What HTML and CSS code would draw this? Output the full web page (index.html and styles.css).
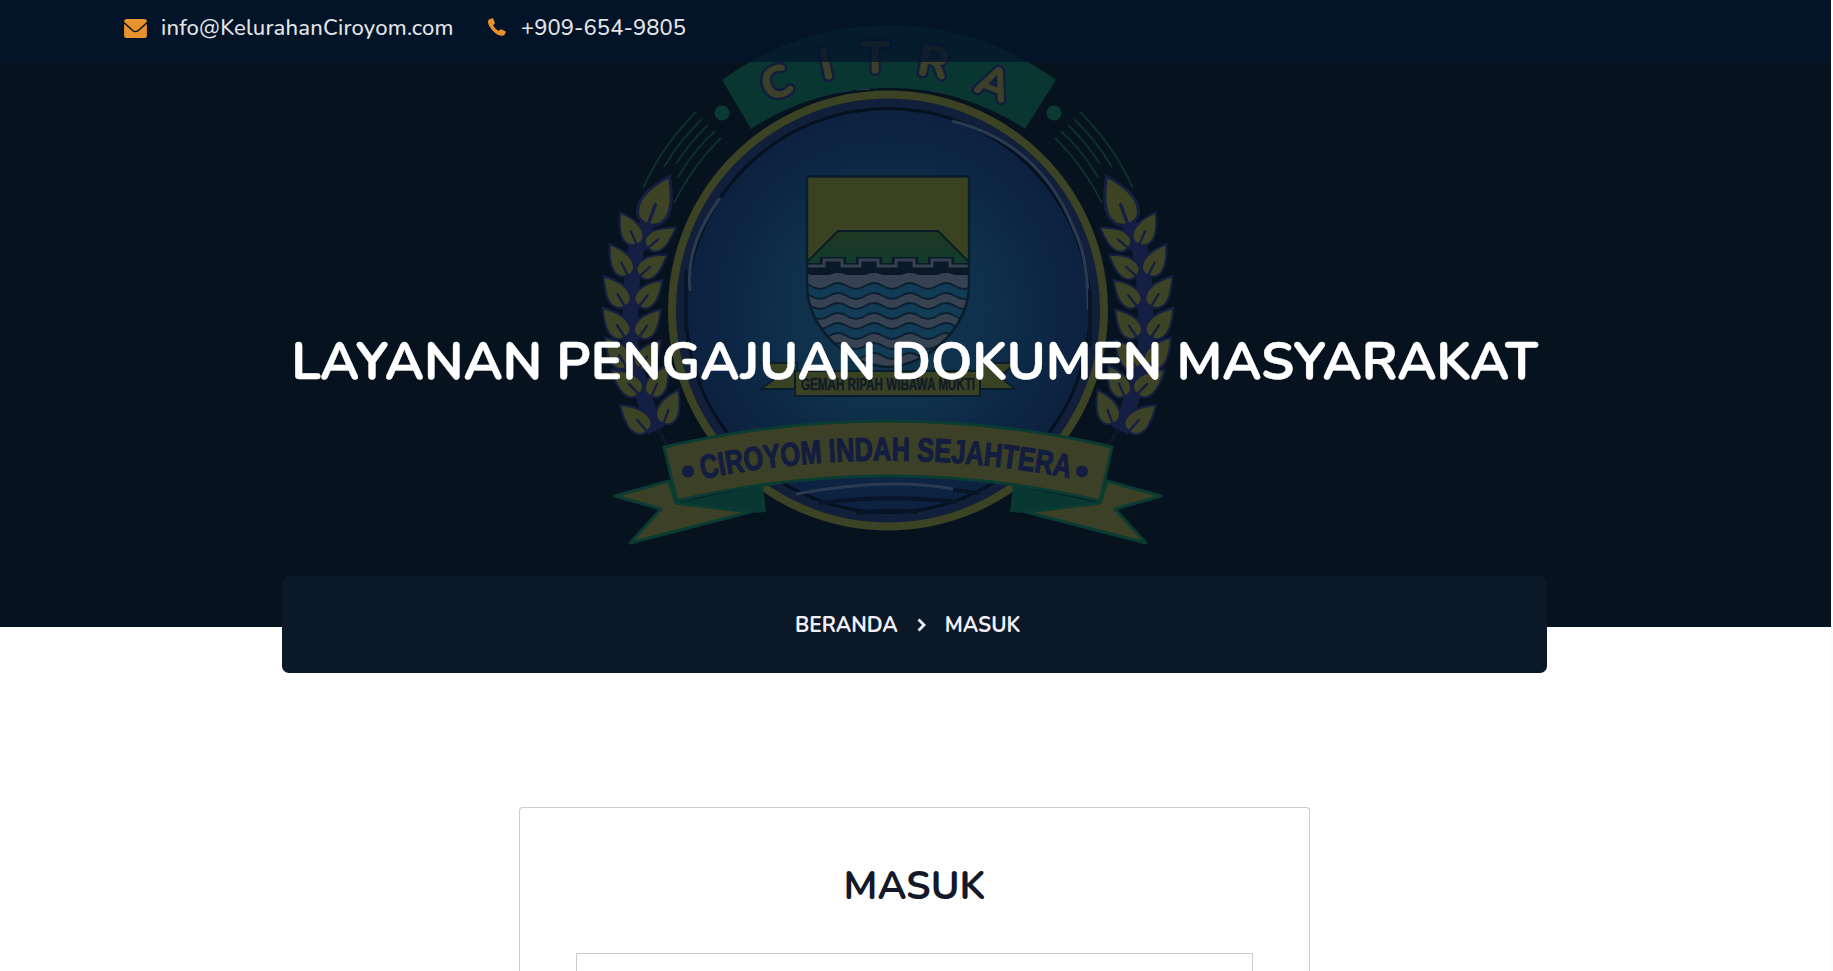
FILE: index.html
```html
<!DOCTYPE html>
<html lang="id">
<head>
<meta charset="utf-8">
<title>Layanan Pengajuan Dokumen Masyarakat</title>
<link rel="stylesheet" href="styles.css">
</head>
<body>
<header class="hero">
  <svg class="emblem" viewBox="0 0 1831 627" aria-hidden="true">
    <defs>
      <radialGradient id="disc"><stop offset="0" stop-color="#11364d"/><stop offset=".5" stop-color="#0f304b"/><stop offset=".8" stop-color="#0c2644"/><stop offset="1" stop-color="#0d2140"/></radialGradient>
      <linearGradient id="hill" x1="0" y1="0" x2="0" y2="1"><stop offset="0" stop-color="#203923"/><stop offset="1" stop-color="#103b2e"/></linearGradient>
      <clipPath id="shieldClip"><path d="M807 176.500H969V285C969 330 925 366 888 367C850 366 807 330 807 285Z"/></clipPath>
      <g id="leaf"><path class="leaf" d="M3-41C10-28 16-14 11-5C8 3-6 5-11-3C-16-14-9-28 3-41Z"/><path class="vein" d="M0 5V-15"/></g>
      <path id="wave" d="M775 0q9 6 18 0t18 0t18 0t18 0t18 0t18 0t18 0t18 0t18 0t18 0t18 0"/>
      <g id="side">
        <path class="stem" d="M649 220L636 250L631 290L630 345L638 378L650 416L657 430"/>
        <path class="twig" d="M657 428L667 444"/>
        <use href="#leaf" transform="translate(649 222) rotate(20) scale(1.22)"/>
        <use href="#leaf" transform="translate(636 243) rotate(-23) scale(-.84 .84)"/>
        <use href="#leaf" transform="translate(649 247) rotate(50) scale(.8)"/>
        <use href="#leaf" transform="translate(627 274) rotate(-26) scale(-.84 .84)"/>
        <use href="#leaf" transform="translate(641 275) rotate(48) scale(.8)"/>
        <use href="#leaf" transform="translate(624 305) rotate(-31) scale(-.86 .86)"/>
        <use href="#leaf" transform="translate(640 305) rotate(38) scale(.82)"/>
        <use href="#leaf" transform="translate(624 336) rotate(-33) scale(-.86 .86)"/>
        <use href="#leaf" transform="translate(640 336) rotate(34) scale(.82)"/>
        <use href="#leaf" transform="translate(626 366) rotate(-32) scale(-.86 .86)"/>
        <use href="#leaf" transform="translate(640 367) rotate(34) scale(.82)"/>
        <use href="#leaf" transform="translate(638 393) rotate(-45) scale(-.86 .86)"/>
        <use href="#leaf" transform="translate(652 395) rotate(24) scale(.82)"/>
        <use href="#leaf" transform="translate(646 430) rotate(-42) scale(-.88 .88)"/>
        <use href="#leaf" transform="translate(664 422) rotate(20) scale(.86)"/>
        <g class="rays"><path d="M696 112Q662 146 643 188"/><path d="M702 119Q680 140 664 167"/><path d="M708 125Q690 142 676 164"/><path d="M715 131Q694 150 678 177"/><path d="M721 138Q694 164 674 203"/></g>
        <circle cx="722" cy="113" r="7.500" fill="#0b3a35"/>
      </g>
      <g id="tail">
        <path class="fold" d="M676 503L763 485L766 512L750 513Z"/>
        <path class="ribbon" d="M615 496L669 481L676 503L750 512L630 543L661 509Z"/>
      </g>
    </defs>
    <use href="#side"/>
    <use href="#side" transform="translate(1776 0) scale(-1 1)"/>
    <circle cx="888" cy="310.500" r="213" fill="#111f3b"/>
    <circle cx="888" cy="310.500" r="216" fill="none" stroke="#3c4224" stroke-width="8"/>
    <circle cx="888" cy="310.500" r="202" fill="url(#disc)" stroke="#06111e" stroke-width="3"/>
    <g class="shine">
      <path d="M720 198Q685 246 690 291"/>
      <path d="M952 121Q1040 143 1074 229Q1089 260 1088 310"/>
      <path d="M750 128A222 222 0 0 1 876 89" stroke-dasharray="14 5"/>
      <path d="M796 494Q888 477 953 489"/>
    </g>
    <g class="streaks"><path d="M821 503Q888 494 955 502"/><path d="M858 513Q888 509 916 512"/><path d="M955 490L978 493"/><path d="M686 272V330"/><path d="M1090 290V345"/></g>
    <path d="M722 80A281 281 0 0 1 1056 80L1025 129A248 248 0 0 0 751 129Z" fill="#093630"/>
    <g class="citra">
      <text transform="translate(782 97) rotate(-22)">C</text>
      <text transform="translate(829 79) rotate(-12)">I</text>
      <text transform="translate(875 73)">T</text>
      <text transform="translate(931 77) rotate(10)">R</text>
      <text transform="translate(988 97) rotate(22)">A</text>
    </g>
    <g clip-path="url(#shieldClip)">
      <rect x="807" y="176" width="162" height="200" fill="#123b55"/>
      <rect x="807" y="176" width="162" height="90" fill="#3b4222"/>
      <path d="M803 266L838 231H938L973 266Z" fill="url(#hill)" stroke="#0a1d25" stroke-width="2"/>
      <rect x="807" y="266" width="162" height="9" fill="#0b1827"/>
      <rect x="807" y="275" width="162" height="8" fill="#364252"/>
      <g class="foam"><use href="#wave" y="281"/><use href="#wave" y="301"/><use href="#wave" y="321"/><use href="#wave" y="341"/><use href="#wave" y="361"/></g>
      <g class="wave-line"><use href="#wave" y="286"/><use href="#wave" y="296"/><use href="#wave" y="306"/><use href="#wave" y="316"/><use href="#wave" y="326"/><use href="#wave" y="336"/><use href="#wave" y="346"/><use href="#wave" y="356"/></g>
      <path class="wall-base" d="M807 267H824V261H842V267H860V261H878V267H896V261H914V267H932V261H950V267H969"/>
      <path class="wall" d="M807 266H824V260H842V266H860V260H878V266H896V260H914V266H932V260H950V266H969"/>
    </g>
    <path d="M807 176.500H969V285C969 330 925 366 888 367C850 366 807 330 807 285Z" fill="none" stroke="#0a1d2b" stroke-width="2.500"/>
    <g class="motto">
      <path d="M797 363H762L777 377L761 389H797ZM980 363H1015L1000 377L1015 389H980Z"/>
      <path d="M795 371H980V396H795Z"/>
      <text x="801" y="390" textLength="174" lengthAdjust="spacingAndGlyphs">GEMAH RIPAH WIBAWA MUKTI</text>
    </g>
    <use href="#tail"/>
    <use href="#tail" transform="translate(1776 0) scale(-1 1)"/>
    <path class="ribbon" d="M664 447Q775 421 888 421Q1002 421 1112 447L1100 501Q995 476 888 476Q782 476 677 501Z"/>
    <circle cx="688" cy="471.500" r="6" fill="#131d40"/><circle cx="1082" cy="471.500" r="6" fill="#131d40"/>
    <path id="nameArc" d="M702 479Q888 442 1074 479" fill="none"/>
    <text class="name"><textPath href="#nameArc" textLength="370" lengthAdjust="spacingAndGlyphs">CIROYOM INDAH SEJAHTERA</textPath></text>
  </svg>
  <div class="topbar">
    <span class="contact mail"><svg viewBox="0 0 24 20"><path d="M3 0H21Q24 0 24 3L14.500 11.500Q12 13.500 9.500 11.500L0 3Q0 0 3 0ZM0 5L8.500 12.500Q12 15.500 15.500 12.500L24 5V17Q24 20 21 20H3Q0 20 0 17Z"/></svg><span class="mail-text">info@KelurahanCiroyom.com</span></span>
    <span class="contact phone"><svg viewBox="0 0 18 18"><path d="M1 1.500L4 .2Q5 0 5.400 1L6.800 4.600Q7 5.300 6.300 6L5 7.200Q7 11 10.800 13L12.200 11.600Q12.800 11.100 13.500 11.400L17 13Q18 13.500 17.700 14.500Q17 17.200 14.500 17.700Q10 18 5.300 13.200Q-.3 7.200 0 3.400Q.2 2.100 1 1.500Z"/></svg><span class="phone-text">+909-654-9805</span></span>
  </div>
  <h1 class="title"><span>LAYANAN PENGAJUAN DOKUMEN MASYARAKAT</span></h1>
</header>
<nav class="crumbs">
  <a class="home">BERANDA</a>
  <svg viewBox="0 0 9 14"><path d="M1.500 1.500L7 7L1.500 12.500"/></svg>
  <a class="current">MASUK</a>
</nav>
<main class="card">
  <h2 class="card-title">MASUK</h2>
  <div class="field"></div>
</main>
</body>
</html>
```
FILE: styles.css
```css
* { box-sizing: border-box; }
html { background: #fbfbfb; }
body { margin: 0; width: 1831px; height: 971px; background: #fff; font-family: Nunito, Lato, sans-serif; }
.hero { position: relative; height: 627px; background: #06121d; overflow: hidden; }
.emblem { position: absolute; inset: 0; width: 1831px; height: 627px; }
.topbar { position: relative; height: 62px; display: flex; align-items: flex-start; padding: 12px 0 0 124px; background: rgba(3, 21, 43, .78); color: #e2e3e5; font-size: 22px; font-weight: 500; line-height: 32px; white-space: nowrap; }
.contact { display: flex; align-items: center; }
.contact svg { fill: #e8912d; flex: none; }
.mail { width: 364px; }
.mail svg { width: 23px; height: 19px; margin-right: 14px; }
.mail-text { letter-spacing: .2px; }
.phone-text { letter-spacing: .08px; }
.phone svg { width: 18px; height: 18px; margin-right: 15px; position: relative; top: -1px; }
.title { position: relative; margin: 261px 0 0; padding-right: 2px; text-align: center; color: #fff; font-size: 52.700px; line-height: 78px; font-weight: 700; white-space: nowrap; -webkit-text-stroke: .4px #fff; }
.crumbs { position: relative; width: 1265px; height: 97px; margin: -51px 0 0 282px; border-radius: 7px; background: #0b1827; color: #f1effa; display: flex; align-items: center; padding: 0 0 0 513px; font-size: 20.800px; font-weight: 700; line-height: 30px; white-space: nowrap; }
.crumbs svg { width: 9px; height: 14px; margin: 1px 19px 0 19px; fill: none; stroke: #f1effa; stroke-width: 2.800; }
.card { width: 791px; height: 164px; margin: 134px 0 0 519px; border: 1px solid #ccc; border-bottom: 0; border-radius: 4px 4px 0 0; padding: 54px 56px 0; }
.card-title { margin: 0 0 41px; text-align: center; color: #14182b; font-size: 39px; line-height: 50px; font-weight: 700; }
.field { height: 18px; border: 1px solid #ccc; border-bottom: 0; }
.leaf { fill: #3d4325; stroke: #151e43; stroke-width: 2.500; }
.vein { fill: none; stroke: #151e43; stroke-width: 2.800; stroke-linecap: round; }
.stem { fill: none; stroke: #151e43; stroke-width: 16; stroke-linejoin: round; }
.twig { fill: none; stroke: #111b38; stroke-width: 2; }
.rays path { fill: none; stroke: #0b302f; stroke-width: 2; }
.shine path { fill: none; stroke: #2a3a50; stroke-width: 3; }
.shine path:nth-child(3) { stroke-width: 1.500; }
.streaks path { fill: none; stroke: #081428; stroke-width: 4; stroke-linecap: round; }
.citra { fill: #3c4028; stroke: #111d3c; stroke-width: 5; paint-order: stroke; font: 800 45px Nunito, sans-serif; text-anchor: middle; }
.foam { fill: none; stroke: #364252; stroke-width: 10; }
.wave-line { fill: none; stroke: #0d2031; stroke-width: 2; }
.wall-base { fill: none; stroke: #0b1827; stroke-width: 8; }
.wall { fill: none; stroke: #35414f; stroke-width: 3; }
.motto path { fill: #3a4224; stroke: #0a1d2b; stroke-width: 2; }
.motto text { font: 700 16px "Liberation Sans", sans-serif; fill: #101c26; stroke: #101c26; stroke-width: .5; }
.fold { fill: #083831; }
.ribbon { fill: #3c4026; stroke: #0a3c33; stroke-width: 3; stroke-linejoin: round; }
.name { font: 700 33px "Liberation Sans", sans-serif; fill: #131d40; stroke: #131d40; stroke-width: 1.200; stroke-linejoin: round; }
```
